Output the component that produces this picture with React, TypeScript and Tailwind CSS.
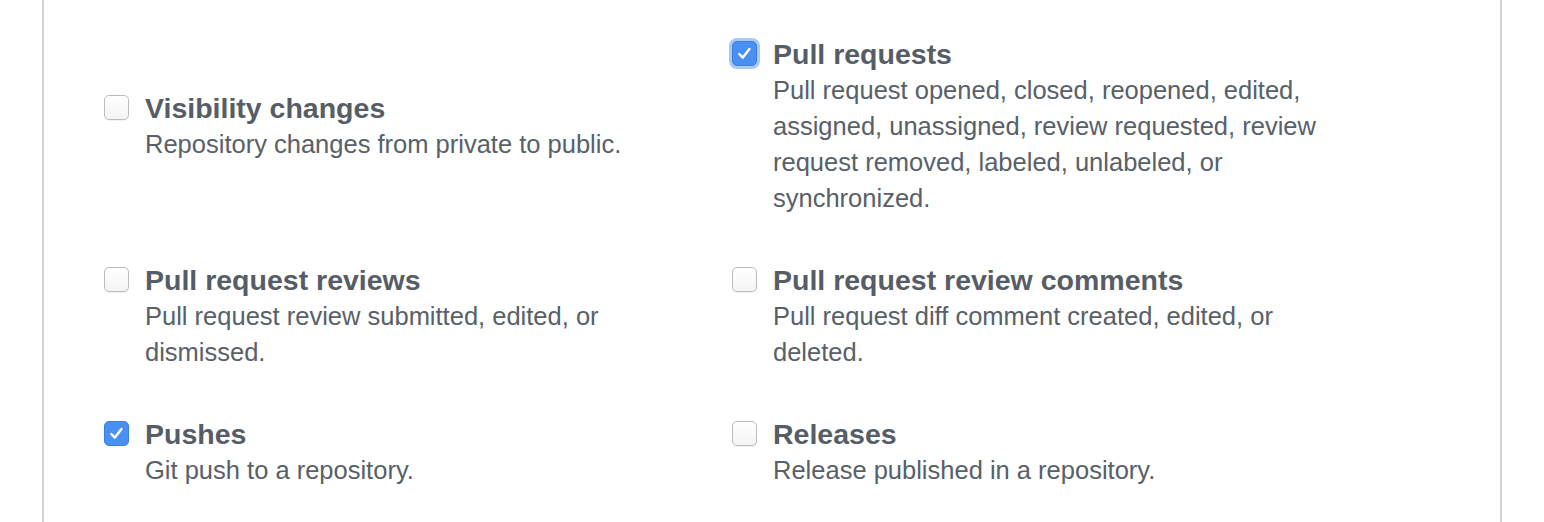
import React from "react";

type Item = { title: string; desc: string; checked?: boolean; focus?: boolean; offset?: boolean };

const items: Item[] = [
  { title: "Visibility changes", desc: "Repository changes from private to public.", offset: true },
  {
    title: "Pull requests",
    desc: "Pull request opened, closed, reopened, edited, assigned, unassigned, review requested, review request removed, labeled, unlabeled, or synchronized.",
    checked: true,
    focus: true,
  },
  { title: "Pull request reviews", desc: "Pull request review submitted, edited, or dismissed." },
  { title: "Pull request review comments", desc: "Pull request diff comment created, edited, or deleted." },
  { title: "Pushes", desc: "Git push to a repository.", checked: true },
  { title: "Releases", desc: "Release published in a repository." },
];

function Box({ checked, focus }: { checked?: boolean; focus?: boolean }) {
  if (checked) {
    return (
      <div
        className={
          "mt-[5px] flex h-[25px] w-[25px] shrink-0 items-center justify-center rounded-[5px] border border-[#3b7fe0] bg-[#4a90f0] " +
          (focus ? "ring-[3px] ring-[#a9c9f5]" : "")
        }
      >
        <svg width="19" height="19" viewBox="0 0 16 16" fill="none">
          <path d="M3.6 8.4 L6.6 11.4 L12.2 4.2" stroke="white" strokeWidth="2" strokeLinecap="round" strokeLinejoin="round" />
        </svg>
      </div>
    );
  }
  return (
    <div className="mt-[5px] h-[25px] w-[25px] shrink-0 rounded-[5px] border border-[#bcbcbc] bg-gradient-to-b from-white to-[#f4f4f4] shadow-[0_1px_1px_rgba(0,0,0,0.06)]" />
  );
}

export default function App() {
  return (
    <div className="min-h-[522px] bg-white" style={{ fontFamily: '"Liberation Sans", Arial, sans-serif' }}>
      <div className="ml-[42px] min-h-[522px] w-[1460px] border-x-2 border-[#d1d5da] bg-white pl-[60px] pt-[36px]">
        <div className="grid grid-cols-[628px_628px] gap-y-[46px]">
          {items.map((it) => (
            <div key={it.title} className={"flex gap-[16px] " + (it.offset ? "pt-[54px]" : "")}>
              <Box checked={it.checked} focus={it.focus} />
              <div className="pr-[40px] text-[#586069]">
                <div className="text-[28.5px] font-bold leading-[36px] text-[#565d66]">{it.title}</div>
                <div className="text-[25.5px] leading-[36px]">{it.desc}</div>
              </div>
            </div>
          ))}
        </div>
      </div>
    </div>
  );
}
